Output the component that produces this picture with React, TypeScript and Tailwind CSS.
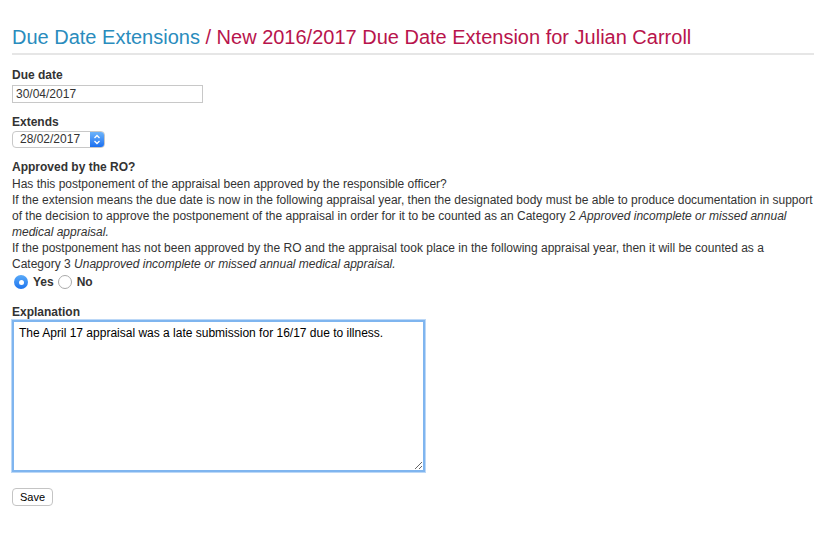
import { useState } from 'react'

const App = () => {
    const [approved, setApproved] = useState(true)
    const [explanation, setExplanation] = useState('The April 17 appraisal was a late submission for 16/17 due to illness.')

    return (
        <div className="w-[827px] h-[536px] bg-white px-3 text-[12px] leading-[16px] text-[#333] font-['Liberation_Sans',Arial,sans-serif]">
            <div className="pt-[26px] mr-[1px] border-b-2 border-[#e6e6e6] pb-[5px]">
                <h1 className="text-[20px] leading-[22px] font-normal">
                    <span className="text-[#2a8cbd]">Due Date Extensions</span>
                    <span className="text-[#b8144c]"> / New 2016/2017 Due Date Extension for Julian Carroll</span>
                </h1>
            </div>

            <form className="flex flex-col items-start">
                <label className="mt-[12px] font-bold">Due date</label>
                <input
                    className="mt-[2px] w-[191px] h-[18px] border border-[#c8c8c8] px-[3px] text-[12px] outline-none"
                    defaultValue="30/04/2017"
                />

                <label className="mt-[11px] font-bold">Extends</label>
                <div className="mt-[1px] flex h-[17px] w-[93px] border border-[#c8c8c8] rounded-[4px] overflow-hidden">
                    <span className="flex-1 pl-[7px] leading-[15px]">28/02/2017</span>
                    <span className="w-[14px] bg-gradient-to-b from-[#6cb3fa] to-[#1a6ff0] flex items-center justify-center">
                        <svg width="8" height="11" viewBox="0 0 8 11" fill="none" stroke="white" strokeWidth="1.3">
                            <path d="M1.5 4 L4 1.5 L6.5 4" />
                            <path d="M1.5 7 L4 9.5 L6.5 7" />
                        </svg>
                    </span>
                </div>

                <label className="mt-[11px] font-bold">Approved by the RO?</label>
                <p className="mt-[1px]">Has this postponement of the appraisal been approved by the responsible officer?</p>
                <p>
                    If the extension means the due date is now in the following appraisal year, then the designated body must be able to produce documentation in support of the decision to approve the postponement of the appraisal in order for it to be counted as an Category 2 <em>Approved incomplete or missed annual medical appraisal.</em>
                </p>
                <p>
                    If the postponement has not been approved by the RO and the appraisal took place in the following appraisal year, then it will be counted as a Category 3 <em>Unapproved incomplete or missed annual medical appraisal.</em>
                </p>
                <div className="mt-[2px] flex items-center gap-[4px] font-bold">
                    <button type="button" onClick={() => setApproved(true)} className="flex items-center gap-[5px] ml-[2px]">
                        {approved ? (
                            <span className="w-[14px] h-[14px] rounded-full bg-gradient-to-b from-[#5aaaf8] to-[#1c74ee] flex items-center justify-center">
                                <span className="w-[5px] h-[5px] rounded-full bg-white" />
                            </span>
                        ) : (
                            <span className="w-[14px] h-[14px] rounded-full border border-[#aaa] bg-white" />
                        )}
                        Yes
                    </button>
                    <button type="button" onClick={() => setApproved(false)} className="flex items-center gap-[5px]">
                        {!approved ? (
                            <span className="w-[14px] h-[14px] rounded-full bg-gradient-to-b from-[#5aaaf8] to-[#1c74ee] flex items-center justify-center">
                                <span className="w-[5px] h-[5px] rounded-full bg-white" />
                            </span>
                        ) : (
                            <span className="w-[14px] h-[14px] rounded-full border border-[#aaa] bg-white" />
                        )}
                        No
                    </button>
                </div>

                <label className="mt-[14px] font-bold">Explanation</label>
                <textarea
                    className="w-[413px] h-[152px] border-2 border-[#7fb5ef] shadow-[0_0_0_1px_#bcd8f7] px-[5px] py-[3px] text-[12px] leading-[16px] text-black outline-none resize"
                    value={explanation}
                    onChange={e => setExplanation(e.target.value)}
                />

                <button type="button" className="mt-[16px] h-[18px] px-[7px] border border-[#c4c4c4] rounded-[4px] bg-white text-[11px] text-black leading-[16px]">
                    Save
                </button>
            </form>
        </div>
    )
}

export default App
